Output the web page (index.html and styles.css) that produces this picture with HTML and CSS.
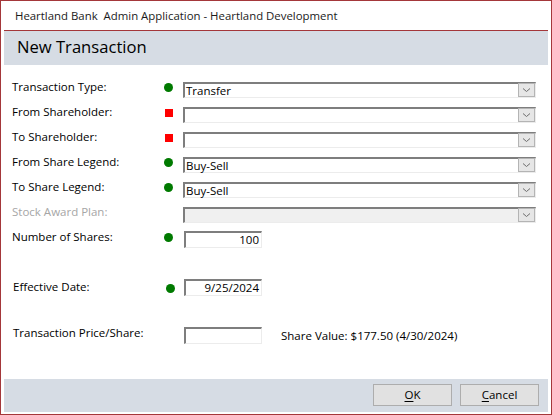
FILE: index.html
```html
<!DOCTYPE html>
<html>
<head>
<meta charset="utf-8">
<link rel="stylesheet" href="styles.css">
</head>
<body>
<div class="window">
  <div class="titlebar">Heartland Bank&nbsp; Admin Application - Heartland Development</div>
  <div class="body">
    <div class="header"><h1 class="heading">New Transaction</h1></div>
    <div class="form">
      <div class="row">
        <div class="label">Transaction Type:</div>
        <div class="ind"><span class="dot"></span></div>
        <div class="combo"><span class="val">Transfer</span><span class="drop"><svg width="9" height="6" viewBox="0 0 9 6"><path d="M1 1.5 L4.5 4.5 L8 1.5" fill="none" stroke="#6e6e6e" stroke-width="1"/></svg></span></div>
      </div>
      <div class="row">
        <div class="label">From Shareholder:</div>
        <div class="ind"><span class="sq"></span></div>
        <div class="combo"><span class="val"></span><span class="drop"><svg width="9" height="6" viewBox="0 0 9 6"><path d="M1 1.5 L4.5 4.5 L8 1.5" fill="none" stroke="#6e6e6e" stroke-width="1"/></svg></span></div>
      </div>
      <div class="row">
        <div class="label">To Shareholder:</div>
        <div class="ind"><span class="sq"></span></div>
        <div class="combo"><span class="val"></span><span class="drop"><svg width="9" height="6" viewBox="0 0 9 6"><path d="M1 1.5 L4.5 4.5 L8 1.5" fill="none" stroke="#6e6e6e" stroke-width="1"/></svg></span></div>
      </div>
      <div class="row">
        <div class="label">From Share Legend:</div>
        <div class="ind"><span class="dot"></span></div>
        <div class="combo"><span class="val">Buy-Sell</span><span class="drop"><svg width="9" height="6" viewBox="0 0 9 6"><path d="M1 1.5 L4.5 4.5 L8 1.5" fill="none" stroke="#6e6e6e" stroke-width="1"/></svg></span></div>
      </div>
      <div class="row">
        <div class="label">To Share Legend:</div>
        <div class="ind"><span class="dot"></span></div>
        <div class="combo"><span class="val">Buy-Sell</span><span class="drop"><svg width="9" height="6" viewBox="0 0 9 6"><path d="M1 1.5 L4.5 4.5 L8 1.5" fill="none" stroke="#6e6e6e" stroke-width="1"/></svg></span></div>
      </div>
      <div class="row">
        <div class="label disabled">Stock Award Plan:</div>
        <div class="ind"></div>
        <div class="combo is-disabled"><span class="val"></span><span class="drop"><svg width="9" height="6" viewBox="0 0 9 6"><path d="M1 1.5 L4.5 4.5 L8 1.5" fill="none" stroke="#6e6e6e" stroke-width="1"/></svg></span></div>
      </div>
      <div class="row">
        <div class="label">Number of Shares:</div>
        <div class="ind"><span class="dot"></span></div>
        <div class="box box-shares">100</div>
      </div>
      <div class="row row-date">
        <div class="label label-indent">Effective Date:</div>
        <div class="ind ind-shift"><span class="dot"></span></div>
        <div class="box box-date">9/25/2024</div>
      </div>
      <div class="row row-price">
        <div class="label label-indent">Transaction Price/Share:</div>
        <div class="ind"></div>
        <div class="box box-price"></div>
        <div class="share-value">Share Value: $177.50 (4/30/2024)</div>
      </div>
    </div>
    <div class="footer">
      <button class="btn"><u>O</u>K</button>
      <button class="btn"><u>C</u>ancel</button>
    </div>
  </div>
</div>
</body>
</html>
```
FILE: styles.css
```css
* { box-sizing: border-box; }
html, body { margin: 0; padding: 0; background: #fff; }
body {
  font-family: "Open Sans", "Noto Sans", "Liberation Sans", sans-serif;
  font-size: 11.5px;
  color: #000;
}
.window {
  width: 552px;
  height: 415px;
  border: 1px solid #a4373a;
  display: flex;
  flex-direction: column;
  background: #fff;
}
.titlebar {
  height: 29px;
  padding: 7px 0 0 14px;
  font-size: 11.4px;
  line-height: 15px;
  color: #1b1b1b;
  white-space: nowrap;
}
.body {
  flex: 1;
  display: flex;
  flex-direction: column;
  padding: 0 3px 2px 3px;
}
.header {
  height: 35px;
  background: #d6dce4;
  border-top: 1px solid #a4373a;
  padding: 5px 0 0 13px;
}
.heading {
  margin: 0;
  font-size: 16.6px;
  font-weight: normal;
  line-height: 22px;
  color: #000;
}
.form {
  flex: 1;
  padding-top: 14px;
}
.row {
  display: flex;
  align-items: flex-start;
  height: 25px;
}
.label {
  width: 151px;
  margin-left: 8px;
  line-height: 16px;
  font-weight: 500;
  color: #000;
  white-space: nowrap;
}
.label-indent { margin-left: 9px; width: 150px; }
.label.disabled { color: #a6a6a6; }
.ind {
  width: 20px;
  height: 16px;
  padding-top: 4px;
}
.dot {
  display: block;
  width: 9px;
  height: 9px;
  margin-left: 1px;
  border-radius: 50%;
  background: #007a00;
}
.ind-shift .dot { margin-left: 3px; margin-top: 1px; }
.sq {
  display: block;
  width: 8px;
  height: 8px;
  margin-left: 2px;
  margin-top: 1px;
  background: #ff0000;
}
.combo {
  margin-top: 3px;
  width: 353px;
  height: 16px;
  border-top: 2px solid #7e7e7e;
  border-left: 2px solid #7e7e7e;
  border-right: 1px solid #ececec;
  border-bottom: 1px solid #ececec;
  display: flex;
  align-items: flex-start;
  background: #fff;
}
.combo.is-disabled { background: #f0f0f0; }
.val {
  flex: 1;
  padding-left: 1px;
  line-height: 13px;
  color: #000;
}
.drop {
  width: 17px;
  height: 14px;
  margin-top: -1px;
  background: #e6e6e6;
  border: 1px solid #b4b4b4;
  display: flex;
  align-items: center;
  justify-content: center;
}
.drop svg { display: block; }
.box {
  margin-left: 1px;
  width: 78px;
  height: 17px;
  border-top: 2px solid #7e7e7e;
  border-left: 2px solid #7e7e7e;
  border-right: 1px solid #ececec;
  border-bottom: 1px solid #ececec;
  text-align: right;
  padding-right: 2px;
  line-height: 14px;
  background: #fff;
}
.box-shares { margin-top: 2px; }
.row-date { margin-top: 25px; }
.box-date { margin-top: 0; }
.row-price { margin-top: 21px; }
.box-price { margin-top: 2px; }
.share-value {
  margin-left: 19px;
  margin-top: 3px;
  line-height: 15px;
  color: #000;
  white-space: nowrap;
}
.footer {
  height: 33px;
  background: #d6dce4;
  display: flex;
  justify-content: flex-end;
  align-items: flex-start;
  gap: 8px;
  padding: 5px 9px 0 0;
}
.btn {
  width: 79px;
  height: 22px;
  background: #e1e1e1;
  border: 1px solid #adadad;
  font-family: inherit;
  font-size: 11.5px;
  color: #000;
  padding: 0;
  line-height: 18px;
}
.btn u { text-decoration-thickness: 1px; text-underline-offset: 2px; }
```
